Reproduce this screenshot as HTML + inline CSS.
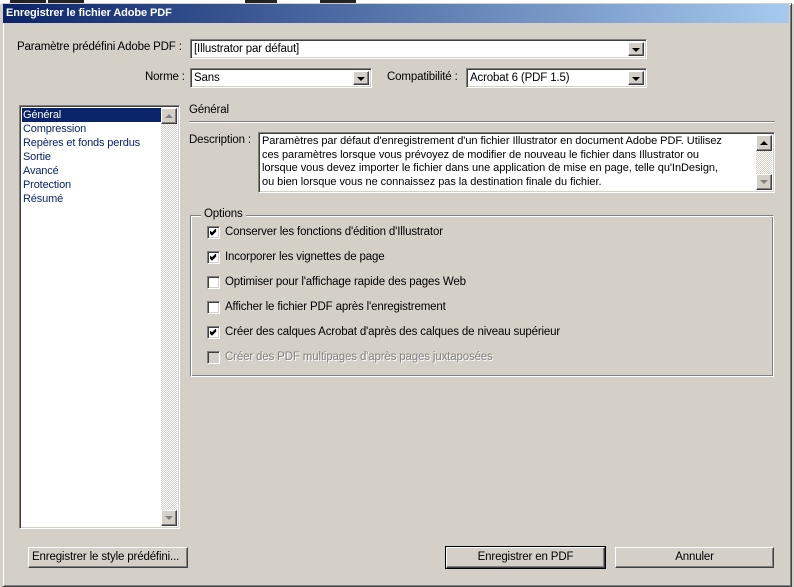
<!DOCTYPE html>
<html><head><meta charset="utf-8"><style>
*{margin:0;padding:0;box-sizing:border-box}
body{width:794px;height:587px;background:#d4d0c8;position:relative;overflow:hidden;font-family:"Liberation Sans",sans-serif;font-size:11.5px;letter-spacing:-0.15px;color:#000}
.a{position:absolute;white-space:nowrap}
.sunk{position:absolute;background:#fff;border:1px solid;border-color:#808080 #fff #fff #808080;box-shadow:inset 1px 1px 0 #404040,inset -1px -1px 0 #d4d0c8}
.btnr{position:absolute;background:#d4d0c8;border:1px solid;border-color:#fff #404040 #404040 #fff;box-shadow:inset -1px -1px 0 #808080}
.arrow{position:absolute;width:0;height:0;border-left:4px solid transparent;border-right:4px solid transparent;border-top:4px solid #000;left:3px;top:5px}
.cb{position:absolute;width:13px;height:13px;background:#fff;border:1px solid;border-color:#808080 #fff #fff #808080;box-shadow:inset 1px 1px 0 #404040,inset -1px -1px 0 #d4d0c8}
.cb svg{position:absolute;left:2px;top:2px}
.btn{position:absolute;height:21px;background:#d4d0c8;border:1px solid;border-color:#fff #404040 #404040 #fff;box-shadow:inset -1px -1px 0 #808080;text-align:center;line-height:18px;white-space:nowrap}
</style></head><body>
<div class="a" style="left:0;top:0;width:794px;height:4px;background:#fff"></div>
<div class="a" style="left:10px;top:0;width:36px;height:3px;background:#222"></div>
<div class="a" style="left:48px;top:0;width:36px;height:3px;background:#222"></div>
<div class="a" style="left:245px;top:0;width:32px;height:3px;background:#222"></div>
<div class="a" style="left:320px;top:0;width:36px;height:3px;background:#222"></div>
<div class="a" style="left:2px;top:3px;width:790px;height:584px;border:1px solid;border-color:#d4d0c8 #404040 #404040 #d4d0c8;box-shadow:inset 1px 1px 0 #fff,inset -1px -1px 0 #808080"></div>
<div class="a" style="left:3px;top:4px;width:786px;height:19px;background:linear-gradient(to right,#0a246a,#a6caef);color:#fff;font-weight:bold;font-size:11px;letter-spacing:-0.1px;line-height:19px;padding-left:3px">Enregistrer le fichier Adobe PDF</div>

<div class="a" style="left:17px;top:41px">Paramètre prédéfini Adobe PDF :</div>
<div class="sunk" style="left:190px;top:39px;width:457px;height:20px"><span class="a" style="left:3px;top:3px">[Illustrator par défaut]</span><div class="btnr" style="right:2px;top:2px;width:16px;height:14px"><div class="arrow"></div></div></div>

<div class="a" style="left:145px;top:71px">Norme :</div>
<div class="sunk" style="left:190px;top:68px;width:182px;height:20px"><span class="a" style="left:3px;top:3px">Sans</span><div class="btnr" style="right:2px;top:2px;width:16px;height:14px"><div class="arrow"></div></div></div>
<div class="a" style="left:387px;top:71px">Compatibilité :</div>
<div class="sunk" style="left:466px;top:68px;width:181px;height:20px"><span class="a" style="left:3px;top:3px">Acrobat 6 (PDF 1.5)</span><div class="btnr" style="right:2px;top:2px;width:16px;height:14px"><div class="arrow"></div></div></div>

<div class="sunk" style="left:19px;top:105px;width:161px;height:424px;font-size:11px">
 <div class="a" style="left:2px;top:2px;width:139px;height:14px;background:#0a246a"></div>
 <div class="a" style="left:3px;top:2px;line-height:14px;color:#fff">Général</div>
 <div class="a" style="left:3px;top:16px;line-height:14px;color:#0a246a">Compression</div>
 <div class="a" style="left:3px;top:30px;line-height:14px;color:#0a246a">Repères et fonds perdus</div>
 <div class="a" style="left:3px;top:44px;line-height:14px;color:#0a246a">Sortie</div>
 <div class="a" style="left:3px;top:58px;line-height:14px;color:#0a246a">Avancé</div>
 <div class="a" style="left:3px;top:72px;line-height:14px;color:#0a246a">Protection</div>
 <div class="a" style="left:3px;top:86px;line-height:14px;color:#0a246a">Résumé</div>
 <div class="a" style="left:141px;top:2px;width:16px;height:418px;background:repeating-conic-gradient(#fff 0 25%,#d4d0c8 0 50%) 0 0/2px 2px"></div>
 <div class="btnr" style="left:141px;top:2px;width:16px;height:16px"><div class="a" style="left:3px;top:5px;border-left:4px solid transparent;border-right:4px solid transparent;border-bottom:4px solid #808080"></div></div>
 <div class="btnr" style="left:141px;top:404px;width:16px;height:16px"><div class="a" style="left:3px;top:5px;border-left:4px solid transparent;border-right:4px solid transparent;border-top:4px solid #808080"></div></div>
</div>

<div class="a" style="left:189px;top:104px">Général</div>
<div class="a" style="left:189px;top:121px;width:586px;height:2px;border-top:1px solid #808080;border-bottom:1px solid #fff"></div>
<div class="a" style="left:189px;top:134px">Description :</div>
<div class="sunk" style="left:258px;top:132px;width:517px;height:61px">
 <div class="a" style="left:3px;top:2px;line-height:13.5px;font-size:11px;letter-spacing:-0.05px">Paramètres par défaut d'enregistrement d'un fichier Illustrator en document Adobe PDF. Utilisez<br>ces paramètres lorsque vous prévoyez de modifier de nouveau le fichier dans Illustrator ou<br>lorsque vous devez importer le fichier dans une application de mise en page, telle qu'InDesign,<br>ou bien lorsque vous ne connaissez pas la destination finale du fichier.</div>
 <div class="a" style="left:497px;top:2px;width:16px;height:55px;background:repeating-conic-gradient(#fff 0 25%,#d4d0c8 0 50%) 0 0/2px 2px"></div>
 <div class="btnr" style="left:497px;top:2px;width:16px;height:16px"><div class="a" style="left:3px;top:5px;border-left:4px solid transparent;border-right:4px solid transparent;border-bottom:4px solid #000"></div></div>
 <div class="btnr" style="left:497px;top:41px;width:16px;height:16px"><div class="a" style="left:3px;top:5px;border-left:4px solid transparent;border-right:4px solid transparent;border-top:4px solid #808080"></div></div>
</div>

<div class="a" style="left:190px;top:215px;width:584px;height:162px;border:1px solid;border-color:#808080 #fff #fff #808080;box-shadow:inset 1px 1px 0 #fff,inset -1px -1px 0 #808080"></div>
<div class="a" style="left:201px;top:208px;padding:0 3px;background:#d4d0c8">Options</div>

<div class="cb" style="left:207px;top:226px"><svg width="7" height="7"><path d="M0 3 L2 5 L6 1 M0 4 L2 6 L6 2 M0 2 L2 4 L6 0" stroke="#000" fill="none" stroke-width="1"/></svg></div>
<div class="a" style="left:225px;top:226px">Conserver les fonctions d'édition d'Illustrator</div>
<div class="cb" style="left:207px;top:251px"><svg width="7" height="7"><path d="M0 3 L2 5 L6 1 M0 4 L2 6 L6 2 M0 2 L2 4 L6 0" stroke="#000" fill="none" stroke-width="1"/></svg></div>
<div class="a" style="left:225px;top:251px">Incorporer les vignettes de page</div>
<div class="cb" style="left:207px;top:276px"></div>
<div class="a" style="left:225px;top:276px">Optimiser pour l'affichage rapide des pages Web</div>
<div class="cb" style="left:207px;top:301px"></div>
<div class="a" style="left:225px;top:301px">Afficher le fichier PDF après l'enregistrement</div>
<div class="cb" style="left:207px;top:326px"><svg width="7" height="7"><path d="M0 3 L2 5 L6 1 M0 4 L2 6 L6 2 M0 2 L2 4 L6 0" stroke="#000" fill="none" stroke-width="1"/></svg></div>
<div class="a" style="left:225px;top:326px">Créer des calques Acrobat d'après des calques de niveau supérieur</div>
<div class="cb" style="left:207px;top:351px;background:#d4d0c8"></div>
<div class="a" style="left:225px;top:351px;color:#808080;text-shadow:1px 1px 0 #fff">Créer des PDF multipages d'après pages juxtaposées</div>

<div class="btn" style="left:28px;top:547px;width:160px;text-align:left;padding-left:3px">Enregistrer le style prédéfini...</div>
<div class="btn" style="left:446px;top:547px;width:159px;outline:1px solid #000">Enregistrer en PDF</div>
<div class="btn" style="left:615px;top:547px;width:159px">Annuler</div>
</body></html>
